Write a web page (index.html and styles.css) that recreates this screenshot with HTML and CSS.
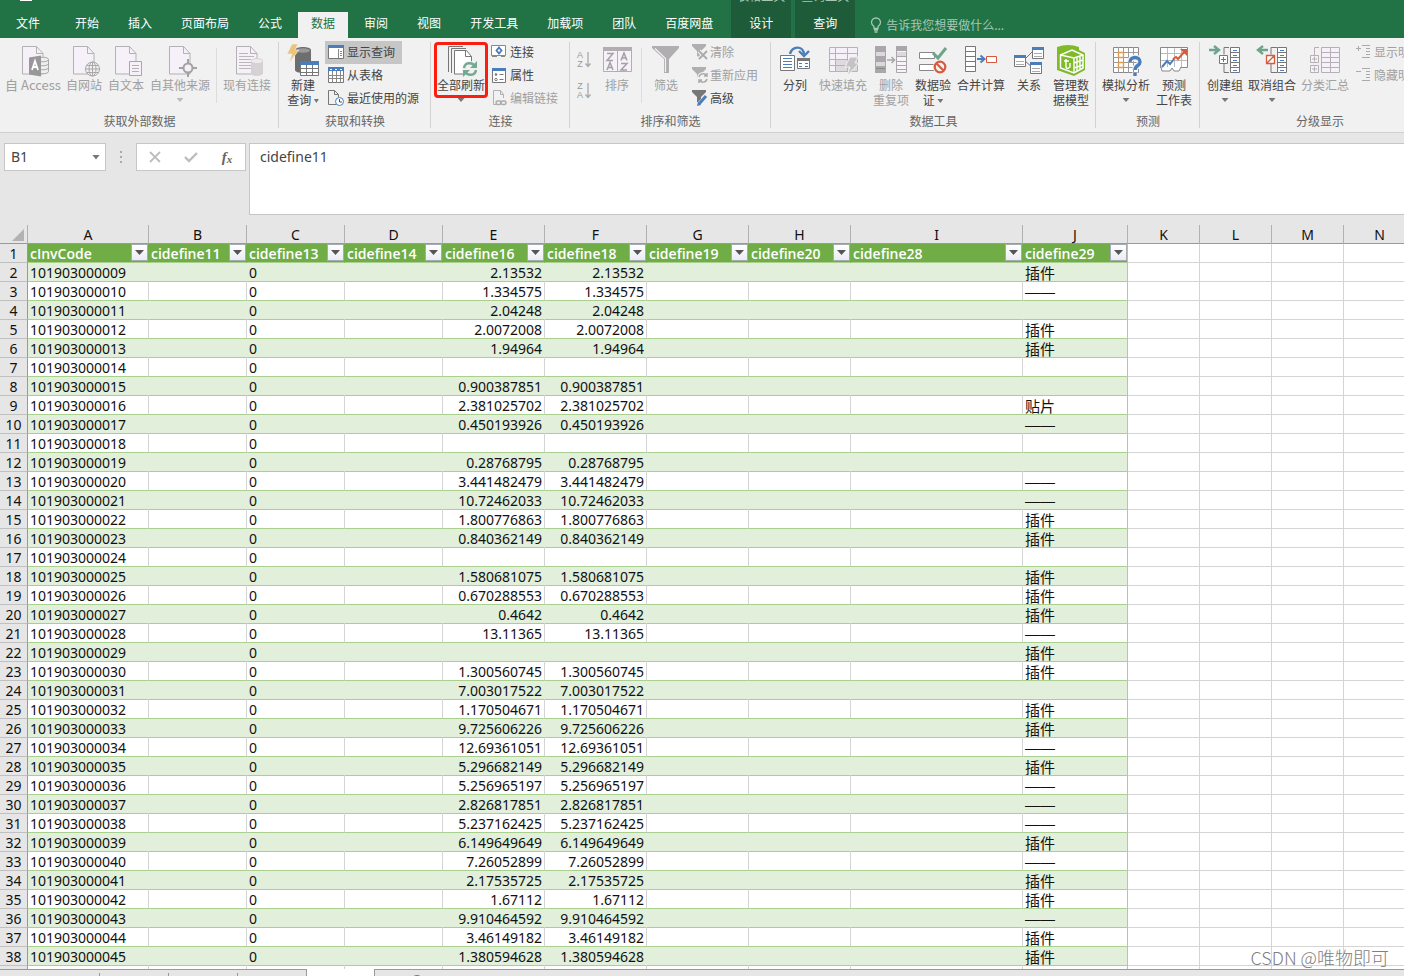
FILE: index.html
```html
<!DOCTYPE html>
<html lang="zh-CN">
<head>
<meta charset="utf-8">
<title>工作簿</title>
<link rel="stylesheet" href="styles.css">
</head>
<body>
<svg class="defs" aria-hidden="true">
  <symbol id="page" viewBox="0 0 32 32"><path d="M5.500 1.500h14l6.500 7v20.500H5.500z" fill="#f6f1f8" stroke="#b3b1b3"/><path d="M19.500 1.500v7H26" fill="none" stroke="#b3b1b3"/></symbol>
  <symbol id="funnel" viewBox="0 0 18 18"><path d="M1 1h14v2l-5 5v7l-4-2V8L1 3z"/></symbol>
</svg>
<div class="app">
  <header class="tabs">
    <button class="tab file">文件</button>
    <button class="tab">开始</button>
    <button class="tab">插入</button>
    <button class="tab">页面布局</button>
    <button class="tab">公式</button>
    <button class="tab active">数据</button>
    <button class="tab">审阅</button>
    <button class="tab">视图</button>
    <button class="tab">开发工具</button>
    <button class="tab">加载项</button>
    <button class="tab">团队</button>
    <button class="tab">百度网盘</button>
    <div class="context">
      <div class="ctx"><span class="over">表格工具</span><button class="tab">设计</button></div>
      <div class="ctx"><span class="over">查询工具</span><button class="tab">查询</button></div>
    </div>
    <button class="tell">
      <svg width="12" height="16" viewBox="0 0 12 16" fill="none" stroke="#a6c7b5" stroke-width="1.300"><path d="M4 11.500V9.500C2 8 1.500 7 1.500 5.500a4.500 4.500 0 0 1 9 0C10.500 7 10 8 8 9.500v2zM4 13h4M4.500 15h3"/></svg>
      <span>告诉我您想要做什么...</span>
    </button>
    <i class="quick"></i>
  </header>

  <section class="ribbon">
    <div class="group g-ext">
      <div class="body">
        <button class="big w54 off"><svg viewBox="0 0 32 32"><use href="#page"/><g fill="#eee" stroke="#a9a7a9"><path d="M20 14.500c0-3 11.500-3 11.500 0v12c0 3-11.500 3-11.500 0z"/><path d="M20 14.500c0 3 11.500 3 11.500 0M20 18.500c0 3 11.500 3 11.500 0M20 22.500c0 3 11.500 3 11.500 0" fill="none"/></g><path d="M12 12.500l12-2v21l-12-2z" fill="#999799"/><path d="M15 25l3-9 3 9M16 22h4" fill="none" stroke="#fff" stroke-width="1.800"/></svg><span class="access">自 Access</span></button>
        <button class="big w36 off"><svg viewBox="0 0 32 32"><use href="#page"/><g fill="#f1f1f1" stroke="#a9a7a9"><circle cx="24.500" cy="24" r="7"/><ellipse cx="24.500" cy="24" rx="3.500" ry="7"/><path d="M17.500 24h14M24.500 17v14M18.500 20.500h12M18.500 27.500h12"/></g></svg><span>自网站</span></button>
        <button class="big w36 off"><svg viewBox="0 0 32 32"><use href="#page"/><path d="M19.500 16.500h12v14h-12z" fill="#f6f1f8" stroke="#a9a7a9"/><path d="M22 20.500h7M22 23.500h7M22 26.500h7" stroke="#b3b1b3"/></svg><span>自文本</span></button>
        <button class="big w60 off"><svg viewBox="0 0 32 32"><use href="#page"/><path d="M24 14v18M15 23h18" stroke="#a3a1a3" stroke-width="2"/><circle cx="24" cy="23" r="4.500" fill="#f4f1f5" stroke="#a3a1a3" stroke-width="2"/></svg><span>自其他来源</span><i class="caret"></i></button>
        <i class="sep"></i>
        <button class="big w48 off"><svg viewBox="0 0 32 32"><use href="#page"/><path d="M8 8.500h9M8 11.500h15M8 14.500h12M8 17.500h12M8 20.500h12M8 23.500h12" stroke="#b9b7b9"/><path d="M20 16c0-4 12-4 12 0v12c0 4-12 4-12 0z" fill="#d5d1d5"/><ellipse cx="26" cy="16" rx="5.500" ry="2" fill="#eeeaee"/></svg><span>现有连接</span></button>
      </div>
      <div class="name">获取外部数据</div>
    </div>

    <div class="group g-get">
      <div class="body">
        <button class="big w36 nq"><svg viewBox="0 0 32 32"><path d="M8 5c0-4 16-4 16 0v20c0 4-16 4-16 0z" fill="#6e6e6e"/><ellipse cx="16" cy="5.500" rx="7" ry="2.200" fill="#9a9a9a"/><path d="M5-1h6L8 5h4L2 18 5 9H0z" fill="#edc27d" stroke="#f1f1f1" stroke-width=".6"/><path d="M13.500 16.500h18v14h-18z" fill="#fff" stroke="#777"/><path d="M13 16h19v4H13z" fill="#4a7ebb"/><path d="M13 23.500h18M13 27.500h18M19.500 20v11M25.500 20v11" stroke="#777"/></svg><span>新建<br>查询 <i class="caret in"></i></span></button>
        <div class="stack">
          <button class="sm on"><svg viewBox="0 0 16 16"><path d="M.5 1.500h15v13H.5z" fill="#fff" stroke="#777"/><path d="M0 1h16v3H0z" fill="#4a7ebb"/><path d="M10.500 5v9M12 7.500h2M12 9.500h2M12 11.500h2" stroke="#888"/></svg><span>显示查询</span></button>
          <button class="sm"><svg viewBox="0 0 16 16"><path d="M.5 1.500h15v14H.5z" fill="#fff" stroke="#777"/><path d="M0 0h16v4H0z" fill="#4a7ebb"/><path d="M2 2.500h2M7 2.500h2M12 2.500h2" stroke="#fff"/><path d="M0 8.500h16M0 11.500h16M4.500 4v12M8.500 4v12M12.500 4v12" stroke="#888"/></svg><span>从表格</span></button>
          <button class="sm"><svg viewBox="0 0 16 16"><path d="M8 14.500H.5V.5h6l4 4V7M6.500.5v4h4" fill="none" stroke="#777"/><circle cx="11.500" cy="11.500" r="4" fill="#fff" stroke="#4a7ebb"/><path d="M11.500 9v3H14" fill="none" stroke="#555"/></svg><span>最近使用的源</span></button>
        </div>
      </div>
      <div class="name">获取和转换</div>
    </div>

    <div class="group g-con">
      <div class="body">
        <button class="big w48 marked"><svg viewBox="0 0 32 32"><path d="M3.500 27V1.500H18M6.500 28V3.500H21" fill="none" stroke="#777"/><path d="M9.500 5.500h12l5 6V29H9.500z" fill="#fff" stroke="#777"/><path d="M20.500 5.500v6h6" fill="none" stroke="#777"/><circle cx="25" cy="24" r="8" fill="#f1f1f1"/><path d="M19 23c1-6 8-6 11-2M31 25c-1 6-8 6-11 2" fill="none" stroke="#74a892" stroke-width="2.400"/><path d="M32 16v7h-7zM18 32v-7h7z" fill="#74a892"/></svg><span>全部刷新</span><i class="caret"></i></button>
        <div class="stack">
          <button class="sm"><svg viewBox="0 0 16 16"><path d="M.5 1.500h14v10H.5z" fill="#fff" stroke="#888"/><path d="M8 3.500l2.500 3L8 9.500l-2.500-3z" fill="none" stroke="#4a7ebb" stroke-width="1.800"/><path d="M1 12.500h5M10 12.500h4" stroke="#888"/></svg><span>连接</span></button>
          <button class="sm"><svg viewBox="0 0 16 16"><path d="M1.500 1.500h13v14h-13z" fill="#fff" stroke="#777"/><path d="M1 1h14v3H1z" fill="#4a7ebb"/><path d="M8.500 7.500h4M8.500 12.500h4" stroke="#777"/><circle cx="5" cy="7.500" r="1.300" fill="#777"/><circle cx="5" cy="12.500" r="1.200" fill="none" stroke="#777"/></svg><span>属性</span></button>
          <button class="sm off"><svg viewBox="0 0 16 16"><path d="M6 14.500H2.500V.5h7l3 4V8M9.500.5v4h3" fill="none" stroke="#b3b1b3"/><g fill="none" stroke="#aaa" stroke-width="1.500"><rect x="5" y="11" width="5" height="3.500" rx="1.700"/><rect x="10" y="11" width="5" height="3.500" rx="1.700"/></g></svg><span>编辑链接</span></button>
        </div>
      </div>
      <div class="name">连接</div>
    </div>

    <div class="group g-sort">
      <div class="body">
        <div class="azs">
          <button class="az"><span>A<br>Z</span><svg viewBox="0 0 6 16" width="6" height="16"><path d="M3 0v14M.5 11.500L3 14.500l2.500-3" fill="none" stroke="#a9a9a9" stroke-width="1.300"/></svg></button>
          <button class="az"><span>Z<br>A</span><svg viewBox="0 0 6 16" width="6" height="16"><path d="M3 0v14M.5 11.500L3 14.500l2.500-3" fill="none" stroke="#a9a9a9" stroke-width="1.300"/></svg></button>
        </div>
        <button class="big w36 off"><svg viewBox="0 0 32 32"><path d="M2.500 2.500h28v24h-28z" fill="#f6f1f8" stroke="#b0aeb0"/><path d="M2 2h29v4H2z" fill="#b0aeb0"/><path d="M16.500 5v22" stroke="#b0aeb0"/><g fill="none" stroke="#a3a1a3" stroke-width="1.500"><path d="M6 8.500h6l-6 7h6M6 25l3-7.500 3 7.500M7 22.500h4M20 15.500L23 8l3 7.500M21 13h4M20 18.500h6l-6 6.500h6"/></g></svg><span>排序</span></button>
        <i class="sep"></i>
        <button class="big w36 off"><svg viewBox="0 0 32 32"><path d="M2 1h27v2L19 14v14h-5V14L2 3z" fill="#b0aeb0"/><path d="M5 3.500l10.500 10V27" fill="none" stroke="#f3f0f3" stroke-width="1.200"/></svg><span>筛选</span></button>
        <div class="stack">
          <button class="sm off"><svg viewBox="0 0 18 18" fill="#b0aeb0"><use href="#funnel"/><path d="M8 8l8 8M16 8l-8 8" stroke="#f1f1f1" stroke-width="4"/><path d="M8 8l8 8M16 8l-8 8" stroke="#aaa" stroke-width="1.800"/></svg><span>清除</span></button>
          <button class="sm off"><svg viewBox="0 0 18 18" fill="#b0aeb0"><use href="#funnel"/><circle cx="12" cy="12" r="6" fill="#f1f1f1"/><path d="M8 11c1-4 6-4 8-1M16 13c-1 4-6 4-8 1M16 7v3h-3M8 17v-3h3" fill="none" stroke="#aaa" stroke-width="1.500"/></svg><span>重新应用</span></button>
          <button class="sm"><svg viewBox="0 0 18 18" fill="#777"><use href="#funnel"/><path d="M8 16l8-9" stroke="#f1f1f1" stroke-width="5"/><path d="M8 15l7-8" stroke="#4a7ebb" stroke-width="3"/><path d="M6 17l1-4 3 3z" fill="#4a7ebb"/></svg><span>高级</span></button>
        </div>
      </div>
      <div class="name">排序和筛选</div>
    </div>

    <div class="group g-tool">
      <div class="body">
        <button class="big w36"><svg viewBox="0 0 32 32"><path d="M11 9c2-8 13-9 14 0" fill="none" stroke="#4a7ebb" stroke-width="2.400"/><path d="M20 6l5 5 5-5" fill="none" stroke="#4a7ebb" stroke-width="2.400"/><path d="M1.500 10.500h14v15h-14z" fill="#fff" stroke="#777"/><path d="M4 13.500h9M4 16.500h9M4 19.500h9M4 22.500h9" stroke="#4a7ebb"/><path d="M18.500 13.500h12v10h-12z" fill="#fff" stroke="#777"/><path d="M18 13h13v3H18z" fill="#777"/><path d="M20 18.500h3M26 18.500h3M20 21.500h3M26 21.500h3" stroke="#4a7ebb"/></svg><span>分列</span></button>
        <button class="big w48 off"><svg viewBox="0 0 32 32"><path d="M2.500 2.500h28v24h-28z" fill="#f6f1f8" stroke="#b5b3b5"/><path d="M8 14h22v12H8z" fill="#dedade"/><path d="M2 8.500h28M2 14.500h28M2 20.500h28M8.500 3v24M20.500 3v24" stroke="#b5b3b5"/><path d="M23 12h8l-3 6h4L20 31l3-9h-5z" fill="#c6c3c6" stroke="#f1f1f1"/></svg><span>快速填充</span></button>
        <button class="big w36 off"><svg viewBox="0 0 32 32"><path d="M0 1h11v27H0z" fill="#a9a7a9"/><path d="M1 7h9v4H1zM1 17h9v4H1z" fill="#ddd8dd"/><path d="M1 23h9v1H1z" fill="#888"/><path d="M12 15h7M16.500 12l3 3-3 3" fill="none" stroke="#a9a7a9" stroke-width="1.600"/><path d="M21.500 1.500h10v26h-10z" fill="#f8f3f8" stroke="#a9a7a9"/><path d="M21 1h11v5H21z" fill="#a9a7a9"/><path d="M22 7h9v4h-9z" fill="#ddd8dd"/><path d="M21 11.500h11M21 16.500h11M21 20.500h11M21 24.500h11" stroke="#a9a7a9"/></svg><span>删除<br>重复项</span></button>
        <button class="big w36"><svg viewBox="0 0 32 32"><path d="M2.500 7.500h15v6h-15zM2.500 19.500h15v6h-15z" fill="#fff" stroke="#888"/><path d="M16 8l5 5 8-10" fill="none" stroke="#6fa48c" stroke-width="3"/><circle cx="23" cy="22" r="7" fill="#f1f1f1"/><circle cx="23" cy="22" r="5.300" fill="none" stroke="#d65b3e" stroke-width="2.200"/><path d="M19 18l8 8" stroke="#d65b3e" stroke-width="2.200"/></svg><span>数据验<br>证 <i class="caret in"></i></span></button>
        <button class="big w48"><svg viewBox="0 0 34 32" class="wide"><path d="M1.500 1.500h10v25h-10z" fill="#fff" stroke="#777"/><path d="M1 6.500h11M1 11.500h11M1 16.500h11M1 21.500h11" stroke="#777"/><path d="M13 14h7M16.500 10.500l4 3.500-4 3.500" fill="none" stroke="#4a7ebb" stroke-width="2"/><path d="M22.500 11.500h10v6h-10z" fill="#fff" stroke="#d65b3e"/></svg><span>合并计算</span></button>
        <button class="big w36"><svg viewBox="0 0 32 32"><path d="M12 14L20 6M12 16l8 7" stroke="#777"/><g fill="#fff" stroke="#777"><path d="M1.500 10.500h11v11h-11zM19.500 2.500h11v11h-11zM17.500 17.500h11v11h-11z"/></g><path d="M1 10h12v3H1zM19 2h12v3H19zM17 17h12v3H17z" fill="#4a7ebb"/><path d="M3 16.500h8M3 19.500h8M21 8.500h8M21 11.500h8M19 23.500h8M19 26.500h8" stroke="#aaa"/></svg><span>关系</span></button>
        <button class="big w36"><svg viewBox="0 0 32 32"><path d="M2 2q11-4 22 0v3l6 3v17L19 31 2 25z" fill="#7fba29"/><path d="M5.500 10L17 5l11 5v13l-9 5-13.500-5z" fill="none" stroke="#fff" stroke-width="1.500"/><path d="M5.500 10L19 13l9-3M19 13v15M22 12v14M25 11v13M19 18l9-3M19 23l9-3" fill="none" stroke="#fff" stroke-width="1.400"/><path d="M9 16h5M11 14v8q0 2 3 1M12 24l3-2v-4" fill="none" stroke="#fff" stroke-width="1.400"/></svg><span>管理数<br>据模型</span></button>
      </div>
      <div class="name">数据工具</div>
    </div>

    <div class="group g-fore">
      <div class="body">
        <button class="big w48"><svg viewBox="0 0 32 32"><path d="M3.500 2.500h25v25h-25z" fill="#fff" stroke="#888"/><path d="M3 7.500h26M3 12.500h26M3 17.500h26M3 22.500h26M8.500 2v26M13.500 2v26M18.500 2v26M23.500 2v26" stroke="#999"/><path d="M8.500 7.500h5v5h-5zM8.500 17.500h5v5h-5z" fill="#fff" stroke="#e59a4b" stroke-width="1.400"/><path d="M20 17c0-6 10-6 10 0 0 4-5 3-5 8M25 27.500V31" fill="none" stroke="#f1f1f1" stroke-width="6"/><path d="M20 17c0-6 10-6 10 0 0 4-5 3-5 8M25 27.500V31" fill="none" stroke="#4a7ebb" stroke-width="3.400"/></svg><span>模拟分析</span><i class="caret"></i></button>
        <button class="big w36"><svg viewBox="0 0 32 32"><path d="M2.500 2.500h27v20h-27z" fill="#fff" stroke="#888"/><path d="M3 8.500h26M3 15.500h26M9.500 3v19M16.500 3v19M23.500 3v19" stroke="#bbb"/><path d="M3 22l1 4h8l2-3 2 3h5l2-4" fill="#fff" stroke="#888"/><path d="M4 22l5-6 3 3 4-5" fill="none" stroke="#4a7ebb" stroke-width="2"/><path d="M15 14l3-2 2 2 8-9" fill="none" stroke="#d65b3e" stroke-width="2"/><path d="M22 4h7v7z" fill="#d65b3e"/></svg><span>预测<br>工作表</span></button>
      </div>
      <div class="name">预测</div>
    </div>

    <div class="group g-out">
      <div class="body">
        <button class="big w36"><svg viewBox="0 0 32 32"><path d="M0 5h8M5 1l5 4-5 4" fill="none" stroke="#6fa48c" stroke-width="2.400"/><path d="M20 2.500h-5v7M15 19v8.500h5" fill="none" stroke="#777"/><path d="M10.500 10.500h8v8h-8z" fill="#fff" stroke="#777"/><path d="M12 14.500h5M14.500 12v5" stroke="#777"/><path d="M21.500 2.500h9v25h-9z" fill="#fff" stroke="#777"/><path d="M21 7.500h10M21 12.500h10M21 17.500h10M21 22.500h10" stroke="#777"/><path d="M24 5.500h4M24 10.500h4M24 15.500h4M24 20.500h4M24 25.500h4" stroke="#4a7ebb"/></svg><span>创建组</span><i class="caret"></i></button>
        <button class="big w48"><svg viewBox="0 0 32 32"><path d="M12 5H4M7 1L2 5l5 4" fill="none" stroke="#6fa48c" stroke-width="2.400"/><path d="M21 2.500h-6v7M15 19v8.500h6" fill="none" stroke="#777"/><path d="M10.500 10.500h8v8h-8zM11 18l7-7" fill="#fff" stroke="#d65b3e" stroke-width="1.300"/><path d="M21.500 2.500h9v25h-9z" fill="#fff" stroke="#777"/><path d="M21 7.500h10M21 12.500h10M21 17.500h10M21 22.500h10" stroke="#777"/><path d="M24 5.500h4M24 10.500h4M24 15.500h4M24 20.500h4M24 25.500h4" stroke="#4a7ebb"/></svg><span>取消组合</span><i class="caret"></i></button>
        <button class="big w48 off"><svg viewBox="0 0 32 32"><g fill="#f6f1f8" stroke="#b5b0b5"><path d="M10 2.500H5.500v8M5.500 27.500H10"/><path d="M1.500 10.500h8v7h-8zM1.500 20.500h8v7h-8z"/><path d="M12.500 2.500h18v25h-18z"/><path d="M12 7.500h18M12 12.500h18M12 17.500h18M12 22.500h18M21.500 2v26M3 14h5M5.500 11.500v5M3 24h5M5.500 21.500v5"/></g></svg><span>分类汇总</span></button>
        <div class="stack">
          <button class="sm off"><svg viewBox="0 0 16 16"><path d="M0 4.500h5M2.500 2v5M6 1.500h8M10 4.500h4M10 7.500h4M10 10.500h4M6 13.500h8" stroke="#aaa"/></svg><span>显示明细数据</span></button>
          <button class="sm off"><svg viewBox="0 0 16 16"><path d="M0 4.500h5M6 1.500h8M10 4.500h4M10 7.500h4M10 10.500h4M6 13.500h8" stroke="#aaa"/></svg><span>隐藏明细数据</span></button>
        </div>
      </div>
      <div class="name">分级显示</div>
    </div>
  </section>

  <section class="formula">
    <div class="namebox"><input type="text" value="B1" aria-label="名称框"><button aria-label="展开名称框"><i class="caret dark"></i></button></div>
    <div class="dots"><i></i><i></i><i></i></div>
    <div class="fx">
      <button aria-label="取消"><svg width="14" height="14" viewBox="0 0 14 14"><path d="M2 2l10 10M12 2L2 12" stroke="#bdbdbd" stroke-width="1.800"/></svg></button>
      <button aria-label="输入"><svg width="14" height="14" viewBox="0 0 14 14"><path d="M1 7l4 4 8-8" fill="none" stroke="#bdbdbd" stroke-width="2.400"/></svg></button>
      <button class="fn" aria-label="插入函数">f<small>x</small></button>
    </div>
    <textarea class="bar" aria-label="编辑栏">cidefine11</textarea>
  </section>

  <main class="sheet">
    <table class="grid">
      <colgroup><col class="c-row"><col class="c-a"><col class="c-b"><col class="c-b"><col class="c-b"><col class="c-e"><col class="c-e"><col class="c-e"><col class="c-e"><col class="c-i"><col class="c-j"><col class="c-k"><col class="c-k"><col class="c-k"><col class="c-k"></colgroup>
      <thead id="letters"></thead>
      <tbody id="rows"></tbody>
    </table>
    <div class="watermark">CSDN @唯物即可</div>
  </main>

  <footer class="sheets">
    <div class="s first"></div><div class="s"></div><div class="s"></div><div class="s"></div>
    <div class="s current"></div>
    <div class="rest"><i></i></div>
  </footer>
</div>
<script src="grid.js"></script>
</body>
</html>
```

FILE: styles.css
```css
* { box-sizing: border-box; }
body {
  margin: 0;
  font: 12px/15px "Noto Sans CJK SC", sans-serif;
  color: #444;
  background: #e6e6e6;
}
button {
  font: inherit;
  color: inherit;
  background: none;
  border: 0;
  padding: 0;
  white-space: nowrap;
}
.defs { position: absolute; width: 0; height: 0; }
.app { display: flex; flex-direction: column; height: 100vh; overflow: hidden; }

/* tab strip */
.tabs { position: relative; display: flex; flex: none; height: 38px; gap: 3px; background: #217346; overflow: hidden; }
.tab { flex: none; padding: 10px 13px 4px; color: #fff; }
.tab.file { padding: 10px 18px 4px 16px; margin-right: 1px; }
.tab.active { margin-top: 12px; padding: 0 13px 6px; background: #f1f1f1; color: #217346; }
.context { display: flex; gap: 4px; margin-left: 2px; }
.ctx { position: relative; display: flex; width: 60px; background: #1e5c39; }
.ctx .tab { width: 100%; }
.over { position: absolute; left: 0; right: 0; top: -12px; line-height: 15px; text-align: center; color: #a6c7b5; }
.quick { position: absolute; left: 20px; top: 0; width: 12px; height: 1px; background: #fff; }
.tell { display: flex; align-items: center; gap: 4px; margin-left: 12px; padding-top: 11px; color: #a6c7b5; }

/* ribbon */
.ribbon { display: flex; flex: none; height: 95px; background: #f1f1f1; border-bottom: 1px solid #d0d0d0; overflow: hidden; }
.group { position: relative; flex: none; display: flex; flex-direction: column; padding-top: 3px; }
.group::after { content: ""; position: absolute; right: 0; top: 4px; bottom: 4px; width: 1px; background: #d2d2d2; }
.body { display: flex; align-items: flex-start; gap: 6px; height: 72px; }
.name { line-height: 16px; text-align: center; color: #666; }
.g-ext { width: 279px; }
.g-ext .body { padding-left: 6px; }
.g-get { width: 152px; }
.g-get .body { padding-left: 6px; gap: 4px; }
.g-con { width: 139px; }
.g-con .body { padding-left: 6px; gap: 4px; }
.g-sort { width: 201px; }
.g-sort .body { padding-left: 7px; }
.g-tool { width: 325px; }
.g-tool .body { padding-left: 6px; }
.g-fore { width: 104px; }
.g-fore .body { padding-left: 6px; }
.g-out { width: 240px; }
.g-out .body { padding-left: 7px; gap: 5px; }

.big { position: relative; flex: none; display: flex; flex-direction: column; align-items: center; padding-top: 4px; }
.big > svg { width: 32px; height: 32px; overflow: visible; }
.big > svg.wide { width: 34px; }
.access { font-size: 13px; }
.w36 { width: 36px; }
.w48 { width: 48px; }
.w54 { width: 54px; }
.w60 { width: 60px; }
.off { color: #a0a0a0; }
.caret { display: block; width: 7px; height: 4px; margin-top: 6px; background: #777; clip-path: polygon(0 0, 100% 0, 50% 100%); }
.caret.in { display: inline-block; width: 6px; margin: 0 0 2px; }
.nq .caret.in { width: 5px; }
.off .caret { background: #bbb; }
.sep { flex: none; width: 1px; height: 55px; margin-top: 7px; background: #dcdcdc; }
.marked::before { content: ""; position: absolute; left: -3px; right: -3px; top: 1px; height: 50px; border: 3px solid #fb1d0d; border-radius: 4px; }

.stack { display: flex; flex-direction: column; align-items: flex-start; }
.sm { display: flex; align-items: center; gap: 3px; height: 23px; padding: 0 7px 2px 3px; }
.sm.on { background: #c6c6c6; }
.sm svg { flex: none; width: 16px; height: 16px; }
.g-con .sm { padding-left: 2px; }
.g-sort .sm { padding-left: 1px; gap: 1px; }
.g-sort .sm svg { width: 18px; height: 18px; }
.g-out .sm { padding-left: 2px; gap: 2px; }
.azs { display: flex; flex-direction: column; gap: 12px; padding-top: 9px; }
.az { display: flex; align-items: center; gap: 2px; height: 19px; width: 16px; font: 9px/9px "Liberation Sans", sans-serif; color: #999; }

/* formula bar */
.formula { display: flex; flex: none; align-items: flex-start; height: 92px; padding: 10px 0 10px 4px; }
.namebox { display: flex; width: 102px; height: 28px; background: #fff; border: 1px solid #c6c6c6; }
.namebox input { flex: 1; min-width: 0; border: 0; padding: 0 6px; background: none; color: #444; font: 14px/18px "Noto Sans", sans-serif; }
.namebox button { width: 18px; }
.caret.dark { width: 8px; height: 5px; margin: 0 auto; }
.dots { display: flex; flex-direction: column; gap: 3px; width: 30px; align-items: center; padding-top: 8px; }
.dots i { width: 2px; height: 2px; background: #aaa; }
.fx { display: flex; width: 110px; height: 28px; background: #fff; border: 1px solid #c6c6c6; }
.fx button { flex: 1; display: flex; align-items: center; justify-content: center; }
.fx .fn { font: italic bold 15px/18px "Liberation Serif", serif; color: #666; }
.fn small { font-size: 11px; padding-top: 4px; }
.bar { flex: 1; height: 72px; margin-left: 3px; padding: 3px 10px; resize: none; background: #fff; border: 1px solid #c6c6c6; border-right: 0; color: #444; font: 14px/19px "Noto Sans", sans-serif; }

/* grid */
.sheet { position: relative; flex: 1; min-height: 0; overflow: hidden; background: #fff; }
.grid { width: 1416px; table-layout: fixed; border-collapse: separate; border-spacing: 0; color: #111; font: 14px/16px "Noto Sans", "Noto Sans CJK SC", sans-serif; }
.c-row { width: 28px; }
.c-a { width: 121px; }
.c-b { width: 98px; }
.c-e { width: 102px; }
.c-i { width: 172px; }
.c-j { width: 105px; }
.c-k { width: 72px; }
.grid th, .grid td { height: 19px; padding: 2px 2px 0; white-space: nowrap; border-right: 1px solid #d4d4d4; border-bottom: 1px solid #d4d4d4; }
.grid th { background: #e6e6e6; font-weight: 400; text-align: center; padding: 2px 0 0; }
.grid thead th { border-color: #b1b1b1; border-bottom-color: #999; }
.grid tbody th { border-right-color: #999; border-bottom-color: #c0c0c0; }
.corner { width: 12px; height: 12px; margin: 0 3px 0 auto; background: #b2b2b2; clip-path: polygon(100% 0, 100% 100%, 0 100%); }
.grid td.t { border-bottom-color: #a9d08e; }
.grid td.last { border-right-color: #a9d08e; }
.band td.t { background: #e2efda; }
.band td.t:not(.last), .head td.t:not(.last) { border-right-color: transparent; }
.grid td.num { text-align: right; }
.grid td.cn { font: 15px/16px "Noto Sans CJK SC", sans-serif; }
.grid td.dash { font-family: "Liberation Sans", sans-serif; }
.head td.t { background: #70ad47; color: #fff; padding: 0 0 0 2px; font: 600 14px/20px "Open Sans", sans-serif; }
.cell { display: flex; justify-content: space-between; height: 18px; }
.filter { flex: none; display: flex; align-items: center; justify-content: center; width: 17px; height: 17px; border: 1px solid #a6abb3; background: linear-gradient(#fff, #e9ecf2); }
.filter .caret { width: 9px; height: 5px; margin: 0; background: #555; }
.watermark { position: absolute; right: 15px; bottom: 0; font: 18px/24px "Noto Sans CJK SC", sans-serif; font-weight: 300; color: #808080; }

/* sheet tabs */
.sheets { display: flex; flex: none; height: 7px; }
.s { width: 69px; border-top: 1px solid #999; position: relative; }
.s::after { content: ""; position: absolute; right: 0; top: 3px; bottom: 0; width: 1px; background: #999; }
.s.first { width: 100px; }
.s:nth-child(4)::after { top: 0; }
.s.current { width: 67px; background: #fff; border-top: 0; }
.s.current::after { display: none; }
.rest { flex: 1; border-top: 1px solid #999; border-left: 1px solid #999; overflow: hidden; padding: 5px 0 0 35px; }
.rest i { display: block; width: 14px; height: 14px; border: 1px solid #777; border-radius: 7px; }
```

FILE: grid.js
```js
const C = "插件", D = "——";
const values = [
  ["2.13532", C], ["1.334575", D], ["2.04248", ""], ["2.0072008", C], ["1.94964", C],
  ["", ""], ["0.900387851", ""], ["2.381025702", "贴片"], ["0.450193926", D], ["", ""],
  ["0.28768795", ""], ["3.441482479", D], ["10.72462033", D], ["1.800776863", C], ["0.840362149", C],
  ["", ""], ["1.580681075", C], ["0.670288553", C], ["0.4642", C], ["13.11365", D],
  ["", C], ["1.300560745", C], ["7.003017522", ""], ["1.170504671", C], ["9.725606226", C],
  ["12.69361051", D], ["5.296682149", C], ["5.256965197", D], ["2.826817851", D], ["5.237162425", D],
  ["6.149649649", C], ["7.26052899", D], ["2.17535725", C], ["1.67112", C], ["9.910464592", D],
  ["3.46149182", C], ["1.380594628", C]
];
const heads = ["cInvCode", "cidefine11", "cidefine13", "cidefine14", "cidefine16", "cidefine18", "cidefine19", "cidefine20", "cidefine28", "cidefine29"];
const blank = "<td></td>".repeat(4);

document.getElementById("letters").innerHTML =
  '<tr><th><div class="corner"></div></th>' + [..."ABCDEFGHIJKLMN"].map(l => `<th scope="col">${l}</th>`).join("") + "</tr>";

let html = '<tr class="head"><th scope="row">1</th>' + heads.map((h, i) =>
  `<td class="t${i === 9 ? " last" : ""}"><div class="cell"><span>${h}</span>${i === 9 || true ? `<button class="filter" aria-label="筛选 ${h}"><i class="caret"></i></button>` : ""}</div></td>`).join("") + blank + "</tr>";

values.forEach(([v, note], i) => {
  const cells = [String(101903000009 + i), "", "0", "", v, v, "", "", "", note];
  html += `<tr class="${i % 2 ? "" : "band"}"><th scope="row">${i + 2}</th>` + cells.map((c, k) => {
    const kind = k === 4 || k === 5 ? " num" : k === 9 ? " cn last" + (c === D ? " dash" : "") : "";
    return `<td class="t${kind}">${c}</td>`;
  }).join("") + blank + "</tr>";
});
html += "<tr><th></th>" + '<td class="t"></td>'.repeat(9) + '<td class="t last"></td>' + blank + "</tr>";
document.getElementById("rows").innerHTML = html;
```
